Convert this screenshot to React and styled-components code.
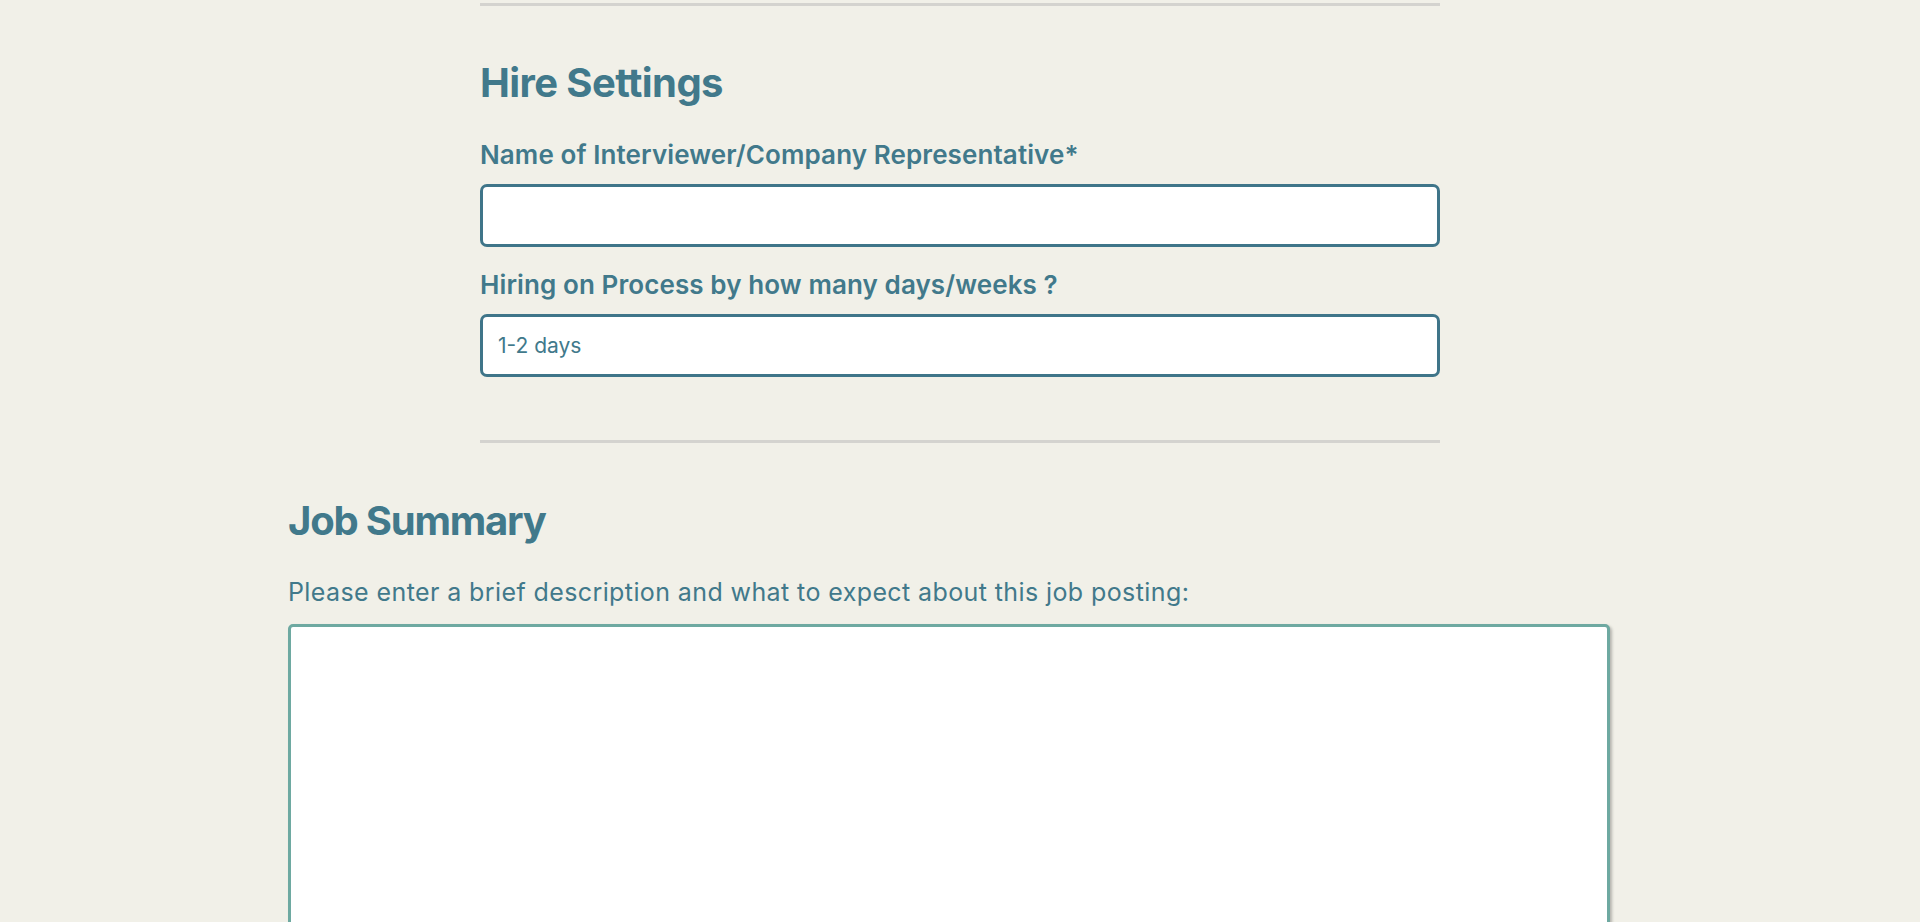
import React from "react";
import styled, { createGlobalStyle } from "styled-components";

const Global = createGlobalStyle`
  html, body { margin: 0; padding: 0; background: #f1f0e8; }
  body { font-family: Inter, "Noto Sans", sans-serif; color: #41798b; }
  * { box-sizing: border-box; }
`;

const Page = styled.div`
  display: flex;
  flex-direction: column;
  padding-top: 3px;
  padding-bottom: 40px;
`;

const Section = styled.section`
  width: 960px;
  margin: 0 auto;
  display: flex;
  flex-direction: column;
`;

const Divider = styled.hr`
  width: 100%;
  height: 3px;
  margin: ${(p) => p.$mt || 0}px 0 0;
  border: none;
  background: #d4d3cf;
`;

const Heading = styled.h2`
  margin: ${(p) => p.$mt || 0}px 0 0;
  font-size: 40px;
  line-height: 48px;
  font-weight: 700;
  letter-spacing: ${(p) => p.$ls ?? -0.6}px;
  color: #41798b;
`;

const Label = styled.label`
  display: block;
  margin-top: ${(p) => p.$mt}px;
  font-size: 26px;
  line-height: 31px;
  font-weight: 600;
  letter-spacing: 0.1px;
  color: #41798b;
`;

const Input = styled.input`
  display: block;
  width: 100%;
  height: 63px;
  margin-top: 14px;
  padding: 0 15px;
  border: 3px solid #3f7589;
  border-radius: 7px;
  background: #fff;
  font-family: Inter, "Noto Sans", sans-serif;
  font-size: 21px;
  color: #41798b;
  outline: none;
`;

const Summary = styled.section`
  width: 1322px;
  margin-left: 288px;
  display: flex;
  flex-direction: column;
`;

const Intro = styled.p`
  margin: 32px 0 0;
  font-size: 25px;
  line-height: 30px;
  font-weight: 400;
  letter-spacing: 0.4px;
  color: #41798b;
`;

const TextArea = styled.textarea`
  display: block;
  width: 100%;
  height: 420px;
  margin-top: 17px;
  border: 3px solid #6ea9a1;
  border-radius: 5px;
  background: #fff;
  box-shadow: 2px 2px 3px rgba(0, 0, 0, 0.25);
  resize: none;
  outline: none;
  font-family: Inter, "Noto Sans", sans-serif;
  font-size: 22px;
`;

export default function App() {
  return (
    <>
      <Global />
      <Page>
        <Section>
          <Divider />
          <Heading $mt={53}>Hire Settings</Heading>
          <Label $mt={32}>Name of Interviewer/Company Representative*</Label>
          <Input type="text" />
          <Label $mt={22}>Hiring on Process by how many days/weeks ?</Label>
          <Input type="text" defaultValue="1-2 days" />
          <Divider $mt={63} />
        </Section>
        <Summary>
          <Heading $mt={54} $ls={-1.2}>Job Summary</Heading>
          <Intro>Please enter a brief description and what to expect about this job posting:</Intro>
          <TextArea />
        </Summary>
      </Page>
    </>
  );
}
